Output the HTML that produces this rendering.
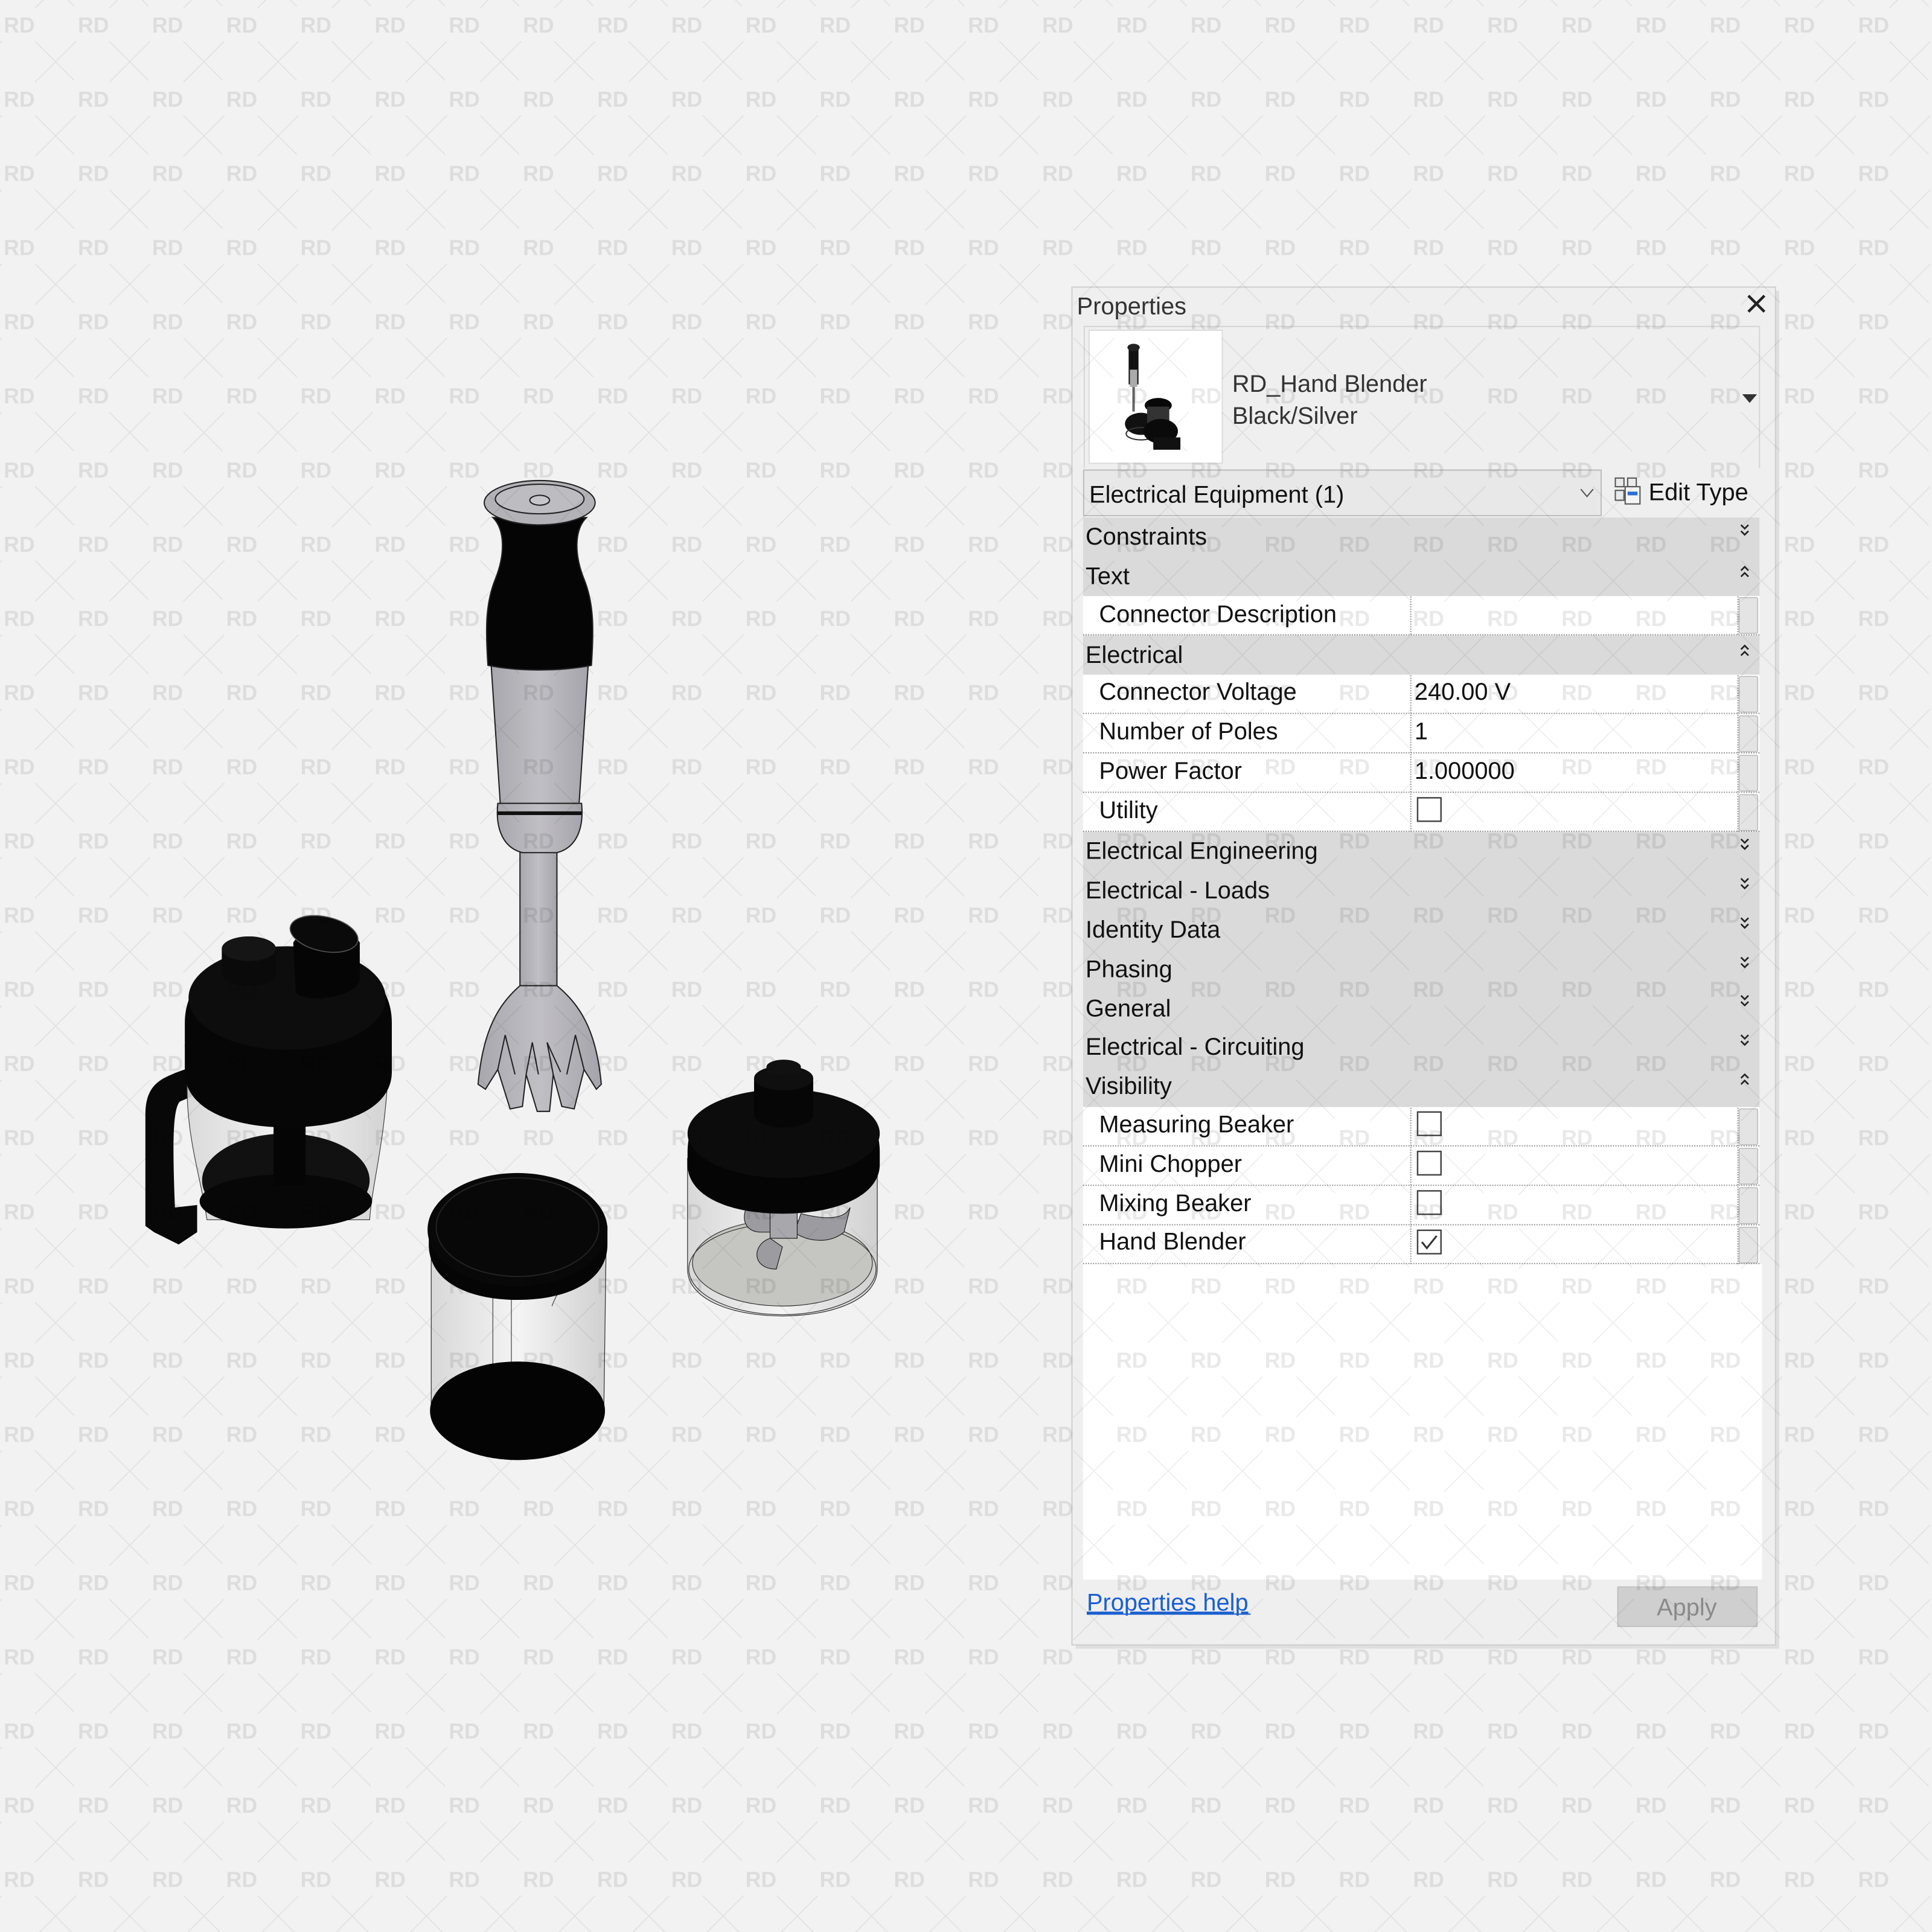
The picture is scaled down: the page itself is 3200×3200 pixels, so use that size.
<!DOCTYPE html>
<html><head><meta charset="utf-8"><style>
html,body{margin:0;padding:0;background:#f2f2f2;}
svg{display:block;}
text{font-family:"Liberation Sans",sans-serif;}
</style></head><body>
<svg width="3200" height="3200" viewBox="0 0 1568 1568" xmlns="http://www.w3.org/2000/svg">
<defs>
<pattern id="wm" x="0" y="0" width="60.2" height="60.2" patternUnits="userSpaceOnUse">
<text x="3" y="26.5" font-size="17.5" font-weight="bold" fill="#000" fill-opacity="0.085" font-family="Liberation Sans,sans-serif">RD</text>
<path d="M28.5,33.5 L61.7,66.7 M61.7,33.5 L28.5,66.7 M-31.7,33.5 L1.5,66.7 M1.5,33.5 L-31.7,66.7 M28.5,-26.7 L61.7,6.5 M61.7,-26.7 L28.5,6.5" stroke="#000" stroke-opacity="0.07" stroke-width="0.8"/>
</pattern>
<linearGradient id="glass" x1="0" x2="1" y1="0" y2="0">
<stop offset="0" stop-color="#d8d8d8"/><stop offset="0.5" stop-color="#f4f4f4"/><stop offset="1" stop-color="#d0d0d0"/>
</linearGradient>
<linearGradient id="silver" x1="0" x2="1"><stop offset="0" stop-color="#a8a7ad"/><stop offset="0.5" stop-color="#c0bfc4"/><stop offset="1" stop-color="#a5a4aa"/></linearGradient>
</defs>
<rect width="1568" height="1568" fill="#f2f2f2"/>

<!-- ===== Hand blender ===== -->
<g stroke="#222" stroke-width="1">
<path d="M422,690 L452,690 L452,800 L422,800 Z" fill="url(#silver)"/>
<path d="M422,800 C405,815 392,835 388,880 L394,884 L404,868 L414,900 L424,898 L427,872 L436,902 L446,902 L449,872 L456,898 L466,900 L474,868 L484,884 L488,880 C484,835 470,815 452,800 Z" fill="url(#silver)"/>
<path d="M404,868 L410,840 L418,872 M427,872 L432,846 L437,872 M449,872 L444,846 L455,870 M474,868 L467,840 L460,872" fill="none"/>
<path d="M398,530 L478,530 L470,652 L406,652 Z" fill="url(#silver)"/>
<path d="M404,652 L472,652 C474,672 468,688 452,692 L424,692 C408,688 402,672 404,652 Z" fill="url(#silver)"/>
<path d="M404,660 L472,660" stroke="#111" stroke-width="3"/>
<path d="M400,420 C410,430 410,450 402,470 C394,490 394,510 396,540 C420,545 455,545 480,540 C482,510 482,490 474,470 C466,450 466,430 476,420 Z" fill="#050505"/>
<ellipse cx="438" cy="408" rx="45" ry="18" fill="#b3b2b7"/>
<ellipse cx="438" cy="405" rx="36" ry="12" fill="#bdbcc1"/>
<ellipse cx="438" cy="406" rx="8" ry="4" fill="#c6c5ca"/>
</g>

<!-- ===== Jug with lid (left) ===== -->
<g>
<path d="M118,905 C118,880 130,875 150,868 L160,866 L160,888 L146,894 C140,900 140,930 142,980 L160,978 L160,1000 L145,1010 L125,1000 L118,995 Z" fill="#080808"/>
<path d="M152,870 C150,920 162,950 168,990 L300,990 C302,960 312,930 315,870 Z" fill="url(#glass)" stroke="#333" stroke-width="0.6" opacity="0.9"/>
<ellipse cx="232" cy="958" rx="68" ry="38" fill="#111"/>
<ellipse cx="232" cy="975" rx="70" ry="22" fill="#070707"/>
<rect x="222" y="900" width="26" height="62" fill="#050505"/>
<path d="M150,830 C150,790 190,768 233,768 C278,768 318,790 318,830 L318,870 C318,900 280,915 233,915 C188,915 150,900 150,870 Z" fill="#060606"/>
<ellipse cx="233" cy="810" rx="80" ry="42" fill="#0d0d0d"/>
<path d="M180,790 L180,770 A22,10 0 0 1 224,770 L224,790 A22,10 0 0 1 180,790 Z" fill="#0a0a0a"/>
<ellipse cx="202" cy="770" rx="22" ry="10" fill="#151515"/>
<path d="M240,805 L238,765 A28,14 0 0 1 292,765 L292,795 C290,810 245,815 240,805 Z" fill="#050505"/>
<ellipse cx="263" cy="758" rx="28" ry="14" fill="#0a0a0a" stroke="#555" stroke-width="0.8" transform="rotate(12 263 758)"/>
</g>

<!-- ===== Measuring beaker (middle) ===== -->
<g>
<path d="M350,1005 L350,1150 L490,1150 L492,1005 Z" fill="url(#glass)" stroke="#333" stroke-width="0.6"/>
<path d="M400,1020 L400,1180 M415,1010 L415,1180 M448,1060 C455,1040 470,1030 480,1030" stroke="#444" stroke-width="0.6" fill="none"/>
<ellipse cx="420" cy="1145" rx="71" ry="40" fill="#040404"/>
<path d="M348,995 L348,1010 C348,1040 380,1055 420,1055 C460,1055 493,1040 493,1010 L493,995 Z" fill="#050505"/>
<ellipse cx="420" cy="998" rx="73" ry="46" fill="#080808"/>
<ellipse cx="420" cy="996" rx="66" ry="40" fill="none" stroke="#222" stroke-width="1"/>
</g>

<!-- ===== Mini chopper (right) ===== -->
<g>
<path d="M558,940 L558,1030 C558,1055 595,1068 635,1068 C675,1068 712,1055 712,1030 L712,940 Z" fill="url(#glass)" stroke="#333" stroke-width="0.6"/>
<ellipse cx="635" cy="1025" rx="73" ry="35" fill="#c5c5c1" stroke="#333" stroke-width="0.6"/>
<ellipse cx="635" cy="1030" rx="76" ry="37" fill="none" stroke="#333" stroke-width="0.6"/>
<path d="M608,975 C600,990 605,1000 618,1000 L625,1000 L625,970 Z M650,985 C670,990 685,990 690,980 L685,1000 C670,1012 650,1005 645,1000 Z M625,1005 C610,1010 610,1030 630,1030 L635,1012 Z" fill="#9c9ba0" stroke="#222" stroke-width="0.6"/>
<rect x="625" y="960" width="22" height="45" fill="#a8a7ac" stroke="#222" stroke-width="0.6"/>
<path d="M558,935 C558,895 595,885 635,885 C675,885 714,895 714,935 L714,945 C714,970 680,985 635,985 C590,985 558,970 558,945 Z" fill="#050505"/>
<ellipse cx="636" cy="920" rx="78" ry="36" fill="#0c0c0c"/>
<path d="M612,905 L612,875 L660,875 L660,905 A24,10 0 0 1 612,905 Z" fill="#060606"/>
<ellipse cx="636" cy="875" rx="24" ry="10" fill="#0f0f0f"/>
<path d="M622,872 L622,866 A14,6 0 0 1 650,866 L650,872 Z" fill="#111"/>
</g>

<!-- ===== Properties panel ===== -->
<g>
<rect x="873" y="236" width="571" height="1102" fill="#000" opacity="0.08"/>
<rect x="870" y="233" width="571" height="1102" fill="#efefef" stroke="#cfcfcf" stroke-width="1"/>
<text x="874" y="255" font-size="19.5" fill="#333">Properties</text>
<path d="M1419,240 L1432,253 M1432,240 L1419,253" stroke="#222" stroke-width="2.2"/>
<!-- header frame -->
<path d="M880,380 L880,265 L1428,265 L1428,380" fill="none" stroke="#d6d6d6" stroke-width="1"/>
<rect x="884" y="268" width="108" height="108" fill="#fff" stroke="#dcdcdc"/>
<!-- thumbnail -->
<g>
<rect x="916" y="282" width="8" height="30" fill="#111"/>
<rect x="917" y="300" width="6" height="14" fill="#aaa"/>
<rect x="919" y="314" width="2" height="20" fill="#666"/>
<ellipse cx="920" cy="282" rx="5" ry="3" fill="#222"/>
<ellipse cx="926" cy="344" rx="13" ry="9" fill="#111"/>
<ellipse cx="926" cy="352" rx="12" ry="5" fill="none" stroke="#333"/>
<ellipse cx="940" cy="329" rx="11" ry="6" fill="#080808"/>
<rect x="931" y="330" width="18" height="18" fill="#333"/>
<ellipse cx="942" cy="350" rx="14" ry="10" fill="#0a0a0a"/>
<rect x="936" y="355" width="22" height="10" fill="#111"/>
</g>
<text x="1000" y="318" font-size="19.5" fill="#333">RD_Hand Blender</text>
<text x="1000" y="344" font-size="19.5" fill="#333">Black/Silver</text>
<path d="M1414,320 L1426,320 L1420,327 Z" fill="#333"/>
<!-- type selector -->
<rect x="879.5" y="381.5" width="420" height="37" fill="#e8e8e8" stroke="#bdbdbd"/>
<text x="884" y="408" font-size="19.5" fill="#111">Electrical Equipment (1)</text>
<path d="M1283,397 L1288,403 L1293,397" fill="none" stroke="#555" stroke-width="1"/>
<!-- edit type icon -->
<g stroke="#555" stroke-width="1" fill="#eaeaea">
<rect x="1311" y="388" width="7" height="7"/><rect x="1321" y="388" width="7" height="7"/>
<rect x="1311" y="398" width="7" height="8"/><rect x="1319" y="395" width="12" height="14" fill="#f5f5f5"/>
</g>
<rect x="1321" y="399" width="8" height="3" fill="#2a6fd0"/>
<text x="1338" y="406" font-size="19.5" fill="#111">Edit Type</text>

<!-- grid -->
<g font-size="19.5" fill="#111">
<!-- row backgrounds -->
<rect x="879" y="420" width="549" height="63.8" fill="#dadada"/>
<rect x="879" y="515.7" width="549" height="31.9" fill="#dadada"/>
<rect x="879" y="675.2" width="549" height="223.3" fill="#dadada"/>
<rect x="879" y="483.8" width="532" height="31.9" fill="#fff"/>
<rect x="879" y="547.6" width="532" height="127.6" fill="#fff"/>
<rect x="879" y="898.5" width="532" height="127.6" fill="#fff"/>
<rect x="1411" y="483.8" width="17" height="31.9" fill="#fff"/>
<rect x="1411" y="547.6" width="17" height="127.6" fill="#fff"/>
<rect x="1411" y="898.5" width="17" height="127.6" fill="#fff"/>
<rect x="879" y="1026" width="551" height="256" fill="#fff"/>
<!-- scroll stubs -->
<g fill="#e4e4e4" stroke="#bcbcbc" stroke-width="0.8">
<rect x="1411.5" y="485" width="15" height="29" rx="1"/>
<rect x="1411.5" y="549" width="15" height="29" rx="1"/>
<rect x="1411.5" y="581" width="15" height="29" rx="1"/>
<rect x="1411.5" y="613" width="15" height="29" rx="1"/>
<rect x="1411.5" y="645" width="15" height="29" rx="1"/>
<rect x="1411.5" y="900" width="15" height="29" rx="1"/>
<rect x="1411.5" y="932" width="15" height="29" rx="1"/>
<rect x="1411.5" y="964" width="15" height="29" rx="1"/>
<rect x="1411.5" y="996" width="15" height="29" rx="1"/>
</g>
<!-- dotted separators -->
<g stroke="#9a9a9a" stroke-width="1" stroke-dasharray="1 1" fill="none">
<path d="M879,515.2 H1428 M879,579 H1428 M879,611 H1428 M879,643 H1428 M879,674.7 H1428 M879,930 H1428 M879,962 H1428 M879,994 H1428 M879,1025.5 H1428"/>
<path d="M1145,484 V515 M1145,548 V675 M1145,899 V1026 M1410.5,484 V515 M1410.5,548 V675 M1410.5,899 V1026"/>
</g>
<!-- headers -->
<text x="881" y="442">Constraints</text>
<text x="881" y="474">Text</text>
<text x="881" y="538">Electrical</text>
<text x="881" y="697">Electrical Engineering</text>
<text x="881" y="729">Electrical - Loads</text>
<text x="881" y="761">Identity Data</text>
<text x="881" y="793">Phasing</text>
<text x="881" y="825">General</text>
<text x="881" y="856">Electrical - Circuiting</text>
<text x="881" y="888">Visibility</text>
<!-- properties -->
<text x="892" y="505">Connector Description</text>
<text x="892" y="568">Connector Voltage</text>
<text x="1148" y="568">240.00 V</text>
<text x="892" y="600">Number of Poles</text>
<text x="1148" y="600">1</text>
<text x="892" y="632">Power Factor</text>
<text x="1148" y="632">1.000000</text>
<text x="892" y="664">Utility</text>
<text x="892" y="919">Measuring Beaker</text>
<text x="892" y="951">Mini Chopper</text>
<text x="892" y="983">Mixing Beaker</text>
<text x="892" y="1014">Hand Blender</text>
</g>
<!-- checkboxes -->
<g fill="#fff" stroke="#444" stroke-width="1.2">
<rect x="1150.5" y="647.5" width="19" height="19"/>
<rect x="1150.5" y="902.5" width="19" height="19"/>
<rect x="1150.5" y="934.5" width="19" height="19"/>
<rect x="1150.5" y="966.5" width="19" height="19"/>
<rect x="1150.5" y="998.5" width="19" height="19"/>
</g>
<path d="M1154,1008 L1158,1013 L1166,1003" fill="none" stroke="#333" stroke-width="1.5"/>
<!-- chevrons -->
<g fill="none" stroke="#222" stroke-width="1.3">
<path d="M1413,426 L1416,429 L1419,426 M1413,431 L1416,434 L1419,431"/>
<path d="M1413,463 L1416,460 L1419,463 M1413,468 L1416,465 L1419,468"/>
<path d="M1413,527 L1416,524 L1419,527 M1413,532 L1416,529 L1419,532"/>
<path d="M1413,681 L1416,684 L1419,681 M1413,686 L1416,689 L1419,686"/>
<path d="M1413,713 L1416,716 L1419,713 M1413,718 L1416,721 L1419,718"/>
<path d="M1413,745 L1416,748 L1419,745 M1413,750 L1416,753 L1419,750"/>
<path d="M1413,777 L1416,780 L1419,777 M1413,782 L1416,785 L1419,782"/>
<path d="M1413,808 L1416,811 L1419,808 M1413,813 L1416,816 L1419,813"/>
<path d="M1413,840 L1416,843 L1419,840 M1413,845 L1416,848 L1419,845"/>
<path d="M1413,875 L1416,872 L1419,875 M1413,880 L1416,877 L1419,880"/>
</g>
<!-- footer -->
<text x="882" y="1307" font-size="19.5" fill="#1a5fd0" text-decoration="underline">Properties help</text>
<path d="M882,1310 L1015,1310" stroke="#1a5fd0" stroke-width="1"/>
<rect x="1313" y="1288" width="113" height="32" fill="#cfcfcf" stroke="#c2c2c2"/>
<text x="1369" y="1311" font-size="19.5" fill="#8a8a8a" text-anchor="middle">Apply</text>
</g>

<!-- watermark overlay -->
<rect width="1568" height="1568" fill="url(#wm)"/>
</svg>
</body></html>
